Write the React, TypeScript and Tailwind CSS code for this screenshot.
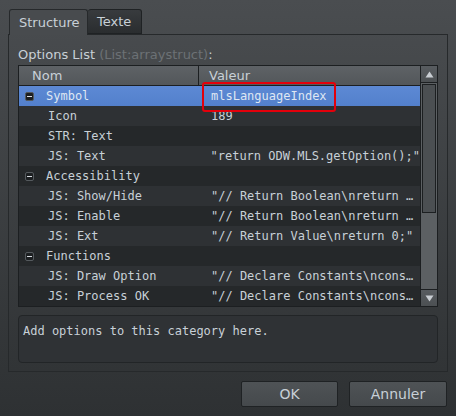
import React from 'react';

type Row = {
  name: string;
  value?: string;
  group?: boolean;
  selected?: boolean;
};

const rows: Row[] = [
  { name: 'Symbol', value: 'mlsLanguageIndex', group: true, selected: true },
  { name: 'Icon', value: '189' },
  { name: 'STR: Text', value: '' },
  { name: 'JS: Text', value: '"return ODW.MLS.getOption();"' },
  { name: 'Accessibility', group: true },
  { name: 'JS: Show/Hide', value: '"// Return Boolean\\nreturn …' },
  { name: 'JS: Enable', value: '"// Return Boolean\\nreturn …' },
  { name: 'JS: Ext', value: '"// Return Value\\nreturn 0;"' },
  { name: 'Functions', group: true },
  { name: 'JS: Draw Option', value: '"// Declare Constants\\ncons…' },
  { name: 'JS: Process OK', value: '"// Declare Constants\\ncons…' },
];

const mono = { fontFamily: '"DejaVu Sans Mono", "Liberation Mono", monospace' };

const Collapse = () => (
  <span className="flex h-[9px] w-[9px] items-center justify-center rounded-[2px] border border-[#555a5e] bg-[#1c1f21]">
    <span className="h-[1px] w-[5px] bg-[#d8dde2]" />
  </span>
);

const ArrowUp = () => (
  <svg width="9" height="7" viewBox="0 0 9 7">
    <path d="M4.5 0.5 L8.5 6.5 L0.5 6.5 Z" fill="#c9ced3" />
  </svg>
);

const ArrowDown = () => (
  <svg width="9" height="7" viewBox="0 0 9 7">
    <path d="M0.5 0.5 L8.5 0.5 L4.5 6.5 Z" fill="#c9ced3" />
  </svg>
);

export default function App() {
  return (
    <div
      className="flex h-[416px] w-[456px] flex-col bg-gradient-to-b from-[#4a4d50] to-[#2e3133] px-[8px] pt-[9px] text-[13px] text-[#c8d0d7]"
      style={{ fontFamily: '"DejaVu Sans", "Liberation Sans", sans-serif' }}
    >
      {/* tabs */}
      <div className="relative z-10 -mb-px flex h-[26px] items-start pl-[1px]">
        <div className="flex h-[26px] w-[79px] items-center rounded-t-[3px] border border-b-0 border-[#26292b] bg-[#484b4e] pl-[9px]">
          Structure
        </div>
        <div className="flex h-[25px] w-[54px] items-center rounded-t-[3px] border border-l-0 border-[#1f2224] bg-gradient-to-b from-[#383b3e] to-[#2a2d2f] pl-[9px]">
          Texte
        </div>
      </div>

      {/* panel */}
      <div className="flex h-[338px] w-[440px] flex-col border border-[#26292b] px-[9px] pt-[12px]">
        <div className="h-[18px] leading-[16px]">
          Options List <span className="text-[#6c7175]">(List:arraystruct)</span>:
        </div>

        {/* list */}
        <div className="flex h-[242px] w-[420px] border border-[#1c1f21]" style={mono}>
          <div className="flex w-[401px] flex-col">
            <div
              className="flex h-[20px] border-b border-[#1c1f21] bg-gradient-to-b from-[#5e6266] to-[#53575a] text-[13px] leading-[20px]"
              style={{ fontFamily: '"DejaVu Sans", "Liberation Sans", sans-serif' }}
            >
              <div className="w-[180px] border-r border-[#1c1f21] pl-[13px]">Nom</div>
              <div className="pl-[10px]">Valeur</div>
            </div>
            {rows.map((r, i) => (
              <div
                key={r.name}
                className={`relative flex h-[20px] items-center text-[12px] whitespace-pre ${
                  r.selected
                    ? 'z-10 bg-gradient-to-b from-[#5d89d4] to-[#5380cc] text-[#dfe7f3]'
                    : i % 2 === 1
                      ? 'bg-[#2e3134]'
                      : 'bg-[#25282a]'
                }`}
              >
                <div className="flex w-[180px] items-center">
                  {r.group ? (
                    <>
                      <span className="ml-[6px] mr-[12px]">
                        <Collapse />
                      </span>
                      {r.name}
                    </>
                  ) : (
                    <span className="pl-[29px]">{r.name}</span>
                  )}
                </div>
                <div className="pl-[12px]">{r.value}</div>
                {r.selected && (
                  <div className="pointer-events-none absolute left-[183px] top-[-4px] z-10 h-[30px] w-[134px] rounded-[3px] border-2 border-[#e3000b]" />
                )}
              </div>
            ))}
          </div>

          {/* scrollbar */}
          <div className="flex w-[17px] flex-col border-l border-[#1c1f21] bg-[#5c6063]">
            <div className="flex h-[17px] items-center justify-center border-b border-[#1c1f21] bg-gradient-to-b from-[#585c60] to-[#4c5053]">
              <ArrowUp />
            </div>
            <div className="mx-[1px] mt-[1px] h-[129px] border border-[#1c1f21] bg-[#4b4f52]" />
            <div className="flex-1" />
            <div className="flex h-[17px] items-center justify-center border-t border-[#1c1f21] bg-gradient-to-b from-[#585c60] to-[#4c5053]">
              <ArrowDown />
            </div>
          </div>
        </div>

        {/* description */}
        <div
          className="mt-[8px] h-[48px] w-[420px] rounded-[4px] border border-[#222527] bg-[#2f3235] pl-[4px] pt-[6px] text-[12px]"
          style={mono}
        >
          Add options to this category here.
        </div>
      </div>

      {/* buttons */}
      <div className="mt-[9px] flex justify-end gap-[11px] pr-[1px]">
        <button className="h-[26px] w-[97px] rounded-[2px] border border-[#1f2224] bg-gradient-to-b from-[#4f5356] to-[#45494c] text-[14px] text-[#c8d0d7]">
          OK
        </button>
        <button className="h-[26px] w-[98px] rounded-[2px] border border-[#1f2224] bg-gradient-to-b from-[#4f5356] to-[#45494c] text-[14px] text-[#c8d0d7]">
          Annuler
        </button>
      </div>
    </div>
  );
}
